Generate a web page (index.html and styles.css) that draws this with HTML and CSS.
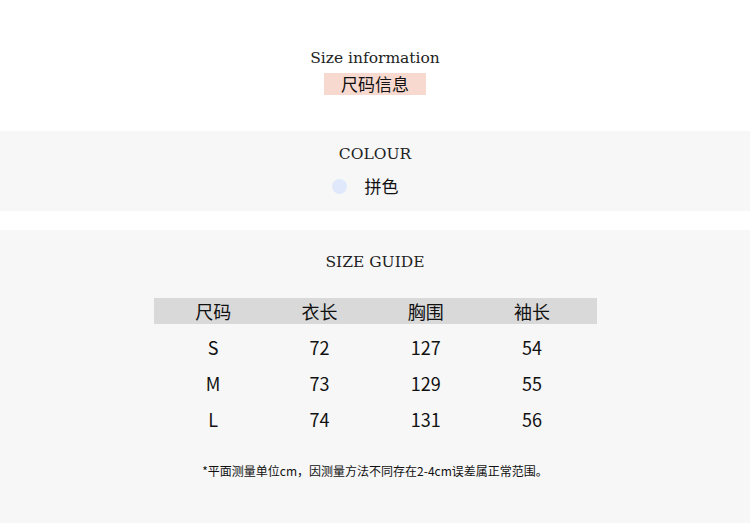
FILE: index.html
```html
<!DOCTYPE html>
<html lang="zh">
<head>
<meta charset="utf-8">
<link rel="stylesheet" href="styles.css">
</head>
<body>
<section class="intro">
  <h1 class="en-title">Size information</h1>
  <div class="tag">尺码信息</div>
</section>
<section class="band colour">
  <h2 class="en-title">COLOUR</h2>
  <div class="swatch-row"><span class="dot"></span><span class="swatch-name">拼色</span></div>
</section>
<section class="band guide">
  <h2 class="en-title">SIZE GUIDE</h2>
  <div class="table">
    <div class="row head"><span>尺码</span><span>衣长</span><span>胸围</span><span>袖长</span></div>
    <div class="row"><span>S</span><span>72</span><span>127</span><span>54</span></div>
    <div class="row"><span>M</span><span>73</span><span>129</span><span>55</span></div>
    <div class="row"><span>L</span><span>74</span><span>131</span><span>56</span></div>
  </div>
  <p class="note">*平面测量单位cm，因测量方法不同存在2-4cm误差属正常范围。</p>
</section>
</body>
</html>
```
FILE: styles.css
```css
html, body { margin: 0; padding: 0; background: #fff; }
body {
  width: 750px;
  height: 523px;
  overflow: hidden;
  font-family: "Noto Sans CJK SC", "Noto Sans", sans-serif;
  color: #111;
}
.en-title {
  margin: 0;
  font-family: "DejaVu Serif", "Liberation Serif", serif;
  font-weight: normal;
  font-size: 15.5px;
  line-height: 20px;
  text-align: center;
  color: #222;
}
.intro {
  height: 131px;
  display: flex;
  flex-direction: column;
  align-items: center;
  padding-top: 48px;
  box-sizing: border-box;
}
.tag {
  margin-top: 5px;
  width: 102px;
  height: 22px;
  background: #f7d9cf;
  font-size: 17px;
  line-height: 22px;
  text-align: center;
  color: #111;
}
.band { background: #f7f7f7; }
.colour {
  height: 80px;
  padding-top: 13px;
  box-sizing: border-box;
}
.swatch-row {
  margin-top: 12px;
  display: flex;
  align-items: center;
  justify-content: center;
  gap: 18px;
  padding-right: 20px;
  height: 20px;
}
.dot {
  width: 15px;
  height: 15px;
  border-radius: 50%;
  background: #dfe9fb;
}
.swatch-name { font-size: 17px; line-height: 20px; }
.guide {
  margin-top: 19px;
  height: 293px;
  padding-top: 22px;
  box-sizing: border-box;
}
.table {
  margin: 26px 0 0 154px;
  width: 443px;
}
.row {
  display: grid;
  grid-template-columns: repeat(4, 106.3px);
  padding-left: 6px;
  height: 36px;
  align-items: center;
  font-size: 18px;
}
.row span { text-align: center; }
.row.head {
  height: 26px;
  background: #d9d9d9;
  margin-bottom: 5px;
}
.note {
  margin: 27px 0 0;
  font-size: 12px;
  line-height: 14px;
  text-align: center;
  color: #111;
}
```
